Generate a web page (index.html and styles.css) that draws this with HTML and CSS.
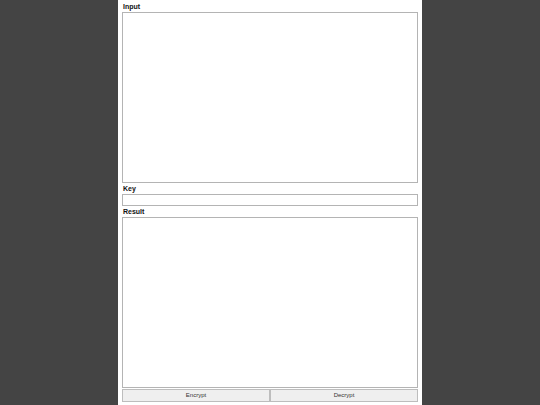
FILE: index.html
```html
<!DOCTYPE html>
<html>
<head>
<meta charset="utf-8">
<link rel="stylesheet" href="styles.css">
</head>
<body>
<main class="panel">
  <label class="label" for="input">Input</label>
  <textarea id="input" class="area area-input"></textarea>
  <label class="label" for="key">Key</label>
  <input id="key" class="key" type="text">
  <label class="label" for="result">Result</label>
  <textarea id="result" class="area area-result"></textarea>
  <div class="actions">
    <button class="btn" type="button">Encrypt</button>
    <button class="btn" type="button">Decrypt</button>
  </div>
</main>
</body>
</html>
```

FILE: styles.css
```css
html, body {
  margin: 0;
  padding: 0;
  height: 100%;
}
body {
  background: #444444;
  font-family: "Liberation Sans", Arial, sans-serif;
}
.panel {
  box-sizing: border-box;
  width: 304px;
  min-height: 100%;
  margin: 0 auto;
  padding: 1px 4px 0 4px;
  background: #ffffff;
  display: flex;
  flex-direction: column;
}
.label {
  display: block;
  font-size: 7px;
  font-weight: bold;
  color: #111;
  height: 11px;
  line-height: 11px;
  padding-left: 1px;
}
.area {
  box-sizing: border-box;
  display: block;
  width: 296px;
  margin: 0;
  padding: 2px;
  border: 1px solid #b4b4b4;
  background: #fff;
  resize: none;
  font-family: "Liberation Sans", Arial, sans-serif;
  font-size: 7px;
}
.area-input {
  height: 171px;
}
.area-result {
  height: 171px;
}
.key {
  box-sizing: border-box;
  display: block;
  width: 296px;
  height: 12px;
  margin: 0;
  padding: 0 2px;
  border: 1px solid #b4b4b4;
  font-size: 7px;
}
.actions {
  display: flex;
  margin-top: 1px;
}
.btn {
  flex: 1 1 0;
  box-sizing: border-box;
  height: 13px;
  margin: 0;
  padding: 0;
  border: 1px solid #bdbdbd;
  background: #efefef;
  font-family: "Liberation Sans", Arial, sans-serif;
  font-size: 6px;
  color: #333;
  line-height: 11px;
}
```
